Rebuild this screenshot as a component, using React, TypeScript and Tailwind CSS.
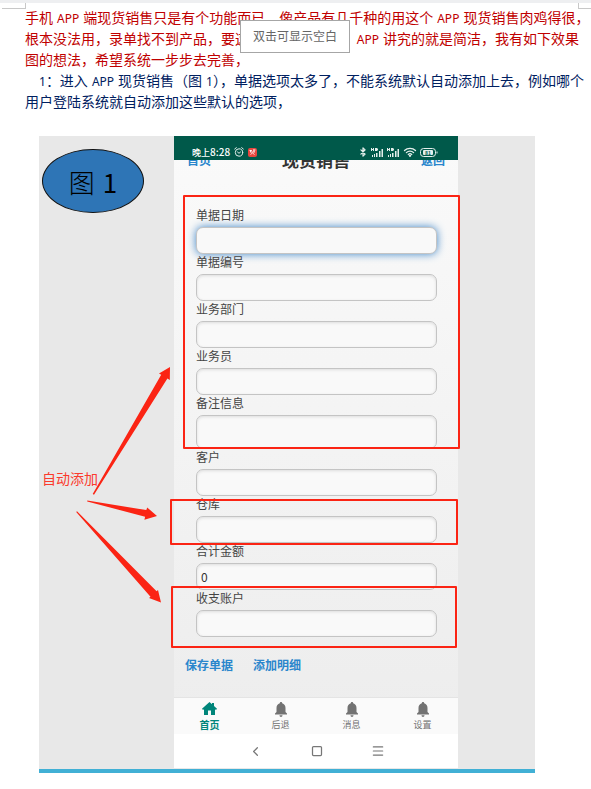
import type { ReactNode } from "react"
import { Bluetooth, ChevronLeft, Menu, Square } from "lucide-react"

// ── Type helpers ──────────────────────────────────────────────────────────────
function Latin({ children, className = "mx-1" }: { children: ReactNode; className?: string }) {
  return <span className={`font-['Noto_Sans'] text-[12px] leading-4 ${className}`}>{children}</span>
}

// ── Document text ─────────────────────────────────────────────────────────────
function DocText() {
  return (
    <div className="relative mr-[5px] ml-[25px] pt-[7px] text-[14px] leading-[21px] whitespace-nowrap">
      <div className="text-[#c00000]">
        <p>手机<Latin>APP</Latin>端现货销售只是有个功能而已，像产品有几千种的用这个<Latin>APP</Latin>现货销售肉鸡得很，</p>
        <p className="mr-[7px] flex justify-between">
          <span>根本没法用，录单找不到产品，要这</span>
          <span><Latin>APP</Latin>讲究的就是简洁，我有如下效果</span>
        </p>
        <p>图的想法，希望系统一步步去完善，</p>
      </div>
      <div className="text-[#002060]">
        <p className="pl-[14px]">
          <Latin className="">1</Latin>：进入<Latin>APP</Latin>现货销售（图<Latin className="ml-1">1</Latin>
          <span className="[font-feature-settings:'halt']">）</span>，单据选项太多了，不能系统默认自动添加上去，例如哪个
        </p>
        <p>用户登陆系统就自动添加这些默认的选项，</p>
      </div>
      <div role="tooltip" className="absolute top-5 left-[215px] border border-[#a6a6a6] bg-white px-3 pt-1 pb-[6px] text-[12px] text-[#666666]">
        双击可显示空白
      </div>
    </div>
  )
}

// ── Phone status bar ──────────────────────────────────────────────────────────
function Signal() {
  return (
    <svg width="13" height="9" viewBox="0 0 13 9" fill="#e4efec" aria-hidden>
      <path d="M0 0h1v1h1V0h1v3H2V2H1v1H0zM4 0h2l1 1v1L6 3H4zM1 7h1v2H1zM3 6h1v3H3zM5 5h1.5v4H5zM8 3h1.5v6H8zM10.5 1H12v8h-1.5z" />
    </svg>
  )
}

function StatusBar() {
  return (
    <div className="relative z-10 flex h-6 items-center justify-between bg-[#00594a] pt-2 pr-5 pl-[18px] text-white">
      <div className="flex items-center gap-1">
        <span className="text-[9px] leading-3 font-medium">晚上<span className="text-[10px]">8:28</span></span>
        <svg width="10" height="10" viewBox="0 0 10 10" fill="none" stroke="#e4efec" strokeLinecap="round" aria-hidden>
          <circle cx="5" cy="5.5" r="3.7" />
          <path d="M.7 2 2.3.7M9.3 2 7.7.7M3.5 5 5 6.3 6.5 5" />
        </svg>
        <svg width="9" height="9" viewBox="0 0 9 9" aria-hidden>
          <rect width="9" height="9" rx="2" fill="#e8473f" />
          <path d="M1.5 2.5H4M5 2h2.5M2 4h5M2.5 6.5l2-1.5 2 1.5M2.5 2v2M6 1.5V4" stroke="#fff" strokeWidth=".8" fill="none" />
        </svg>
      </div>
      <div className="flex items-center gap-[3px]">
        <Bluetooth size={10} strokeWidth={3} color="#e4efec" />
        <Signal />
        <Signal />
        <svg width="14" height="10" viewBox="0 0 14 10" fill="none" stroke="#e4efec" strokeWidth="1.3" strokeLinecap="round" aria-hidden>
          <path d="M1.5 3.5c3-2.900 8-2.900 11 0M3.4 5.6c2-2 5.200-2 7.200 0M5.3 7.5c1-1 2.400-1 3.400 0" />
          <circle cx="7" cy="8.8" r=".5" fill="#e4efec" />
        </svg>
        <svg width="18" height="9" viewBox="0 0 18 9" aria-hidden>
          <rect x=".5" y=".5" width="15" height="8" rx="3" fill="none" stroke="#e4efec" />
          <rect x="3" y="2" width="10" height="5" rx="1" fill="#e4efec" />
          <path d="M16.5 3.5h1v2h-1z" fill="#e4efec" />
          <text x="8" y="6.5" textAnchor="middle" fontSize="5" fontWeight="700" fill="#00594a">81</text>
        </svg>
      </div>
    </div>
  )
}

// ── Sales form ────────────────────────────────────────────────────────────────
const FIELDS: { id: string; label: string; value?: string; active?: boolean; multiline?: boolean }[] = [
  { id: "date", label: "单据日期", active: true },
  { id: "number", label: "单据编号" },
  { id: "department", label: "业务部门" },
  { id: "clerk", label: "业务员" },
  { id: "remark", label: "备注信息", multiline: true },
  { id: "customer", label: "客户" },
  { id: "warehouse", label: "仓库" },
  { id: "total", label: "合计金额", value: "0" },
  { id: "account", label: "收支账户" },
]

const BOX = "block w-full rounded-[7px] border border-[#c4c4c4] bg-[#f9f9f9] px-1 text-[12px] text-[#333333] outline-none"

function SalesForm() {
  return (
    <form className="pt-[35px] pr-[21px] pl-[22px]">
      {FIELDS.map((f) => (
        <div key={f.id}>
          <label htmlFor={f.id} className="mb-1 block w-fit text-[12px] leading-4 text-[#444444]">{f.label}</label>
          {f.multiline ? (
            <textarea id={f.id} className={`${BOX} h-[34px] resize-none shadow-[inset_0_1px_3px_#dddddd]`} />
          ) : (
            <input
              id={f.id}
              defaultValue={f.value}
              className={`${BOX} h-[27px] ${f.active ? "shadow-[0_0_8px_#3f86c8]" : "shadow-[inset_0_1px_3px_#dddddd]"}`}
            />
          )}
        </div>
      ))}
    </form>
  )
}

// ── Bottom tabs ───────────────────────────────────────────────────────────────
function HomeIcon() {
  return (
    <svg width="15" height="13" viewBox="0 0 15 13" fill="#00857a" aria-hidden>
      <path d="M7.5 0 0 6.8 1 8l1-.8V13h4V8.5h3V13h4V7.2l1 .8 1-1.2-3-2.700V1h-2v1.3z" />
    </svg>
  )
}

function BellIcon() {
  return (
    <svg width="12" height="15" viewBox="0 0 12 15" fill="#727272" aria-hidden>
      <path d="M6 0c.7 0 1.2.5 1.2 1.2C9.3 1.8 10.500 3.6 10.500 6v4L12 11.500v1H0v-1L1.500 10V6c0-2.400 1.200-4.200 3.300-4.800C4.800.5 5.300 0 6 0zM4.500 13.300h3C7.500 14.400 6.800 15 6 15s-1.500-.6-1.500-1.700z" />
    </svg>
  )
}

const TABS = ["首页", "后退", "消息", "设置"]

function TabBar() {
  return (
    <nav className="grid h-[37px] grid-cols-4 border-t border-[#e4e4e4] bg-[#fafafa] text-[9px] leading-3 text-[#727272]">
      {TABS.map((t, i) => (
        <button key={t} type="button" className={`flex flex-col items-center pt-1 ${i === 0 ? "text-[10px] font-bold text-[#00857a]" : ""}`}>
          <span className="flex h-[17px] items-start">{i === 0 ? <HomeIcon /> : <BellIcon />}</span>
          {t}
        </button>
      ))}
    </nav>
  )
}

function Phone() {
  return (
    <div className="relative bg-linear-to-b from-[#fafafa] to-[#ececec]">
      <StatusBar />
      {/* scrolled half way under the status bar */}
      <header className="-mt-3 flex h-6 items-center justify-between px-[13px] text-[12px] font-bold text-[#2a86cc]">
        <a href="#home">首页</a>
        <h1 className="text-[17px] text-[#333333]">现货销售</h1>
        <a href="#back">返回</a>
      </header>
      <SalesForm />
      <div className="flex gap-5 px-[11px] pt-5 pb-6 text-[12px] leading-4 font-bold text-[#2a86cc]">
        <button type="button">保存单据</button>
        <button type="button">添加明细</button>
      </div>
      <TabBar />
      <div className="flex h-[34px] items-center justify-center gap-12 bg-white text-[#777777]">
        <ChevronLeft size={15} strokeWidth={2} />
        <Square size={12} strokeWidth={2.5} />
        <Menu size={14} strokeWidth={2} />
      </div>

      {/* red frames around the fields to fill in automatically */}
      <div className="pointer-events-none absolute top-[59px] right-[-2px] left-[9px] z-10 h-[254px] rounded-[1px] border-2 border-[#fb2414]" />
      <div className="pointer-events-none absolute top-[363px] right-0 left-[-4px] z-10 h-[46px] rounded-[1px] border-2 border-[#fb2414]" />
      <div className="pointer-events-none absolute top-[450px] right-px left-[-3px] z-10 h-[62px] rounded-[1px] border-2 border-[#fb2414]" />
    </div>
  )
}

// ── Annotated figure ──────────────────────────────────────────────────────────
function Figure() {
  return (
    <figure className="relative mt-6 mr-14 ml-[39px] border-b-4 border-[#41b0d5] bg-[#e8e8e8] pr-[77px] pb-px pl-[135px]">
      <Phone />
      <figcaption className="absolute top-[13px] left-[3px] flex h-16 w-[102px] items-baseline justify-center gap-2 rounded-[50%] border border-[#111111] bg-[#2e75b6] pt-[14px] text-[26px] leading-9 text-black">
        <span className="font-light">图</span>
        <span>1</span>
      </figcaption>
      <p className="absolute top-[332px] left-[3px] text-[14px] leading-5 text-[#fb3a2c]">自动添加</p>
      <svg className="pointer-events-none absolute top-0 left-0 z-10" width="135" height="480" viewBox="0 0 135 480" fill="#fb2414" aria-hidden>
        <path d="M53.7 358 122.2 238.8 120 237.6 131 231 130.800 244 128.400 242.600 55 358.700z" />
        <path d="M48.3 364.5 107.3 374.1 108.2 371.5 118 380 105.4 383.7 106.100 380.700 48.200 365.500z" />
        <path d="M37.2 376 38 375.3 117.6 455.2 119 454 122 466.5 110 462 111.500 460.800z" />
      </svg>
    </figure>
  )
}

export default function App() {
  return (
    <main className="overflow-x-hidden bg-white pb-4 font-['Noto_Sans_CJK_SC',sans-serif]">
      <div className="h-[3px] bg-[#eeeff1]" />
      {/* page margin corners */}
      <div className="flex h-[6px] justify-between pl-[2px]">
        <div className="w-6 border-r border-b border-[#c8c8c8]" />
        <div className="w-[13px] border-b border-l border-[#c8c8c8]" />
      </div>
      <div className="-mt-[9px]">
        <DocText />
      </div>
      <Figure />
    </main>
  )
}
